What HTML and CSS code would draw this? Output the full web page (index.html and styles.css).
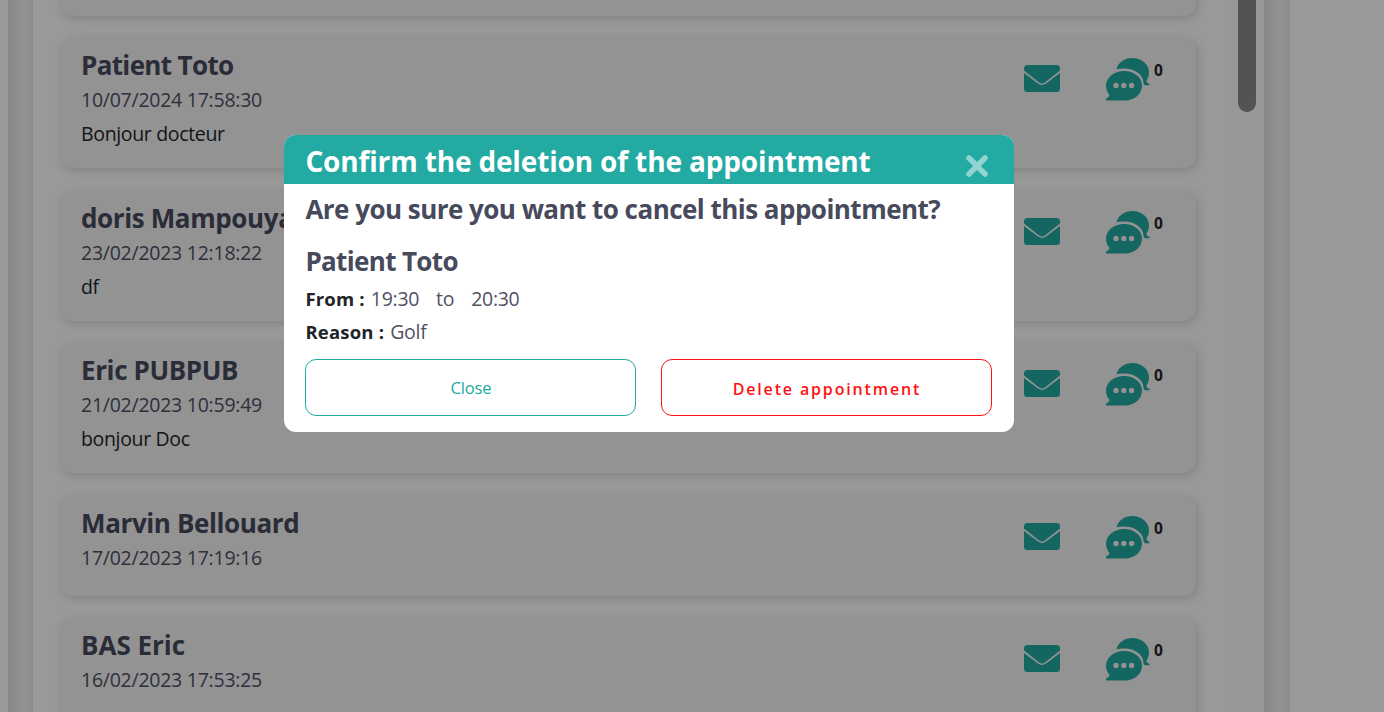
FILE: index.html
```html
<!DOCTYPE html>
<html lang="en">
<head>
<meta charset="utf-8">
<title>Messages</title>
<link rel="stylesheet" href="styles.css">
</head>
<body>
<svg class="sprite" aria-hidden="true">
  <symbol id="mail" viewBox="0 0 36 27">
    <path d="M3.5 0h29A3.500 3.500 0 0 1 36 3.500V5.600L21.200 17.200Q18 19.600 14.800 17.200L0 5.600V3.500A3.500 3.500 0 0 1 3.500 0z"/>
    <path d="M0 8L14 18.600Q18 21.200 22 18.600L36 8V23.500A3.500 3.500 0 0 1 32.500 27H3.500A3.500 3.500 0 0 1 0 23.500z"/>
  </symbol>
  <symbol id="chat" viewBox="0 0 44 43">
    <path d="M10.500 11.500C12 4.500 18.500 0 26.500 0C36 0 43 6.500 43 14.500C43 17.700 42 20.500 40.300 22.800C40.800 24.300 41.800 25.300 43.500 26V27.300H39.500C38.300 27.300 37.600 26.300 37.500 24.500C37 17 29.500 10.600 18 10.600C15 10.600 12.700 10.900 10.500 11.500z"/>
    <path fill-rule="evenodd" d="M18 13C28 13 36 19.300 36 27.500C36 36 28.500 42.500 19 42.500H0V40.500C2 39.800 3.100 38.600 3.600 37C1.300 34.500 0 31.300 0 27.800C0 19.500 8 13 18 13zM10 24.800a2.700 2.700 0 1 0 0 5.400a2.700 2.700 0 1 0 0-5.400zM17.800 24.800a2.700 2.700 0 1 0 0 5.400a2.700 2.700 0 1 0 0-5.400zM25.600 24.800a2.700 2.700 0 1 0 0 5.400a2.700 2.700 0 1 0 0-5.400z"/>
  </symbol>
</svg>

<div class="page">
  <div class="side-panel"></div>
  <div class="gutter"></div>
  <main class="panel">
    <div class="list">
      <article class="card first"></article>
      <article class="card">
        <div class="info"><h2 class="tight">Patient Toto</h2><p class="date">10/07/2024 17:58:30</p><p class="msg">Bonjour docteur</p></div>
        <div class="actions"><svg class="mail"><use href="#mail"/></svg><svg class="chat"><use href="#chat"/></svg><span class="count">0</span></div>
      </article>
      <article class="card">
        <div class="info"><h2 class="snug">doris Mampouya</h2><p class="date">23/02/2023 12:18:22</p><p class="msg">df</p></div>
        <div class="actions"><svg class="mail"><use href="#mail"/></svg><svg class="chat"><use href="#chat"/></svg><span class="count">0</span></div>
      </article>
      <article class="card">
        <div class="info"><h2 class="snug">Eric PUBPUB</h2><p class="date">21/02/2023 10:59:49</p><p class="msg">bonjour Doc</p></div>
        <div class="actions"><svg class="mail"><use href="#mail"/></svg><svg class="chat"><use href="#chat"/></svg><span class="count">0</span></div>
      </article>
      <article class="card short">
        <div class="info"><h2 class="snug">Marvin Bellouard</h2><p class="date">17/02/2023 17:19:16</p></div>
        <div class="actions"><svg class="mail"><use href="#mail"/></svg><svg class="chat"><use href="#chat"/></svg><span class="count">0</span></div>
      </article>
      <article class="card">
        <div class="info"><h2>BAS Eric</h2><p class="date">16/02/2023 17:53:25</p></div>
        <div class="actions"><svg class="mail"><use href="#mail"/></svg><svg class="chat"><use href="#chat"/></svg><span class="count">0</span></div>
      </article>
    </div>
    <div class="track"><div class="thumb"></div></div>
  </main>
  <div class="gutter right"></div>
  <div class="side-panel wide"></div>
</div>

<div class="backdrop">
  <section class="modal" role="dialog">
    <header class="modal-head">
      <h1>Confirm the deletion of the appointment</h1>
      <svg class="close" viewBox="0 0 22 22"><path d="M3 3L19 19M19 3L3 19"/></svg>
    </header>
    <div class="modal-body">
      <h2 class="question">Are you sure you want to cancel this appointment?</h2>
      <h2 class="patient">Patient Toto</h2>
      <p class="row"><b class="from">From :</b><span class="start">19:30</span><span class="to">to</span><span>20:30</span></p>
      <p class="row"><b class="reason">Reason :</b><span>Golf</span></p>
      <div class="buttons">
        <button class="btn">Close</button>
        <button class="btn danger">Delete appointment</button>
      </div>
    </div>
  </section>
</div>
</body>
</html>
```
FILE: styles.css
```css
* { box-sizing: border-box; }
body { margin: 0; height: 712px; overflow: hidden; background: #fff; font-family: "Open Sans", "Noto Sans", sans-serif; color: #212529; }
h1, h2, p { margin: 0; }
.sprite { position: absolute; width: 0; height: 0; }

.page { display: flex; height: 712px; overflow: hidden; }
.side-panel { width: 8px; background: #fff; }
.side-panel.wide { flex: 1; }
.gutter { width: 25px; background: linear-gradient(90deg, #e2e2e2, #eeeeee 9px, #f3f3f3 17px, #e8e8e8); }
.gutter.right { width: 26px; }
.panel { width: 1231px; display: flex; justify-content: space-between; padding-left: 27px; background: #fff; }
.list { width: 1136px; display: flex; flex-direction: column; gap: 21.300px; }
.card { flex: none; height: 131.200px; display: flex; justify-content: space-between; padding: 12.200px 33px 0 21px; border-radius: 13px; background: #f5f5f5; box-shadow: 2px 3px 10px rgba(0, 0, 0, .15); }
.card.first { margin-top: -115.200px; }
.card.short { height: 101px; }
.card h2 { margin-bottom: 1px; font-size: 26px; line-height: 33px; font-weight: 700; color: #464a5c; }
.card h2.tight { letter-spacing: -.65px; }
.card h2.snug { letter-spacing: -.38px; }
.date, .msg { font-size: 19.500px; line-height: 34px; }
.date { color: #4f5165; letter-spacing: -.25px; }
.msg { letter-spacing: -.34px; }
.actions { display: flex; align-items: flex-start; padding-top: 8.600px; fill: #22aaa1; }
.mail { width: 36px; height: 27px; margin: 7px 46px 0 0; }
.chat { width: 44px; height: 43px; }
.count { width: 13px; padding-left: 4px; font-size: 15.500px; line-height: 25px; font-weight: 700; }
.track { width: 34px; padding-left: 8px; background: #fdfdfd; }
.thumb { width: 18px; height: 112px; border-radius: 0 0 9px 9px; background: #8a8a8a; }

.backdrop { position: fixed; inset: 0; background: rgba(0, 0, 0, .4); padding: 134.700px 0 0 284.400px; }
.modal { width: 730px; height: 297px; border-radius: 12px; background: #fff; overflow: hidden; }
.modal-head { display: flex; justify-content: space-between; height: 49px; padding: 0 26.500px 0 21px; background: #23aaa3; }
.modal-head h1 { font-size: 28px; line-height: 53px; font-weight: 700; letter-spacing: -.15px; color: #fff; white-space: nowrap; }
.close { width: 22px; height: 22px; margin-top: 20px; stroke: #91d4d1; stroke-width: 5.500; stroke-linecap: round; }
.modal-body { padding: 8.300px 21px 0; }
.modal-body h2 { font-size: 26px; line-height: 34px; font-weight: 700; letter-spacing: -.53px; color: #464a5c; white-space: nowrap; }
.modal-body .patient { margin-top: 18.500px; letter-spacing: -.65px; }
.row { display: flex; font-size: 19.500px; line-height: 33px; letter-spacing: -.3px; color: #4f5165; }
.patient + .row { margin-top: 4px; }
.row b { color: #212529; font-size: 18.500px; line-height: 33px; letter-spacing: .2px; margin-right: 6px; }
.to { margin: 0 17px; }
.buttons { display: flex; gap: 25px; margin-top: 10.300px; }
.btn { width: 331px; height: 57px; border: 1px solid #22aaa1; border-radius: 11px; background: #fff; color: #22aaa1; font: 16.500px/24px "Open Sans", "Noto Sans", sans-serif; letter-spacing: -.2px; padding-top: 2px; }
.btn.danger { border-color: #f11; color: #f11; font-size: 16px; font-weight: 600; letter-spacing: 1.850px; padding-top: 4px; }
```
